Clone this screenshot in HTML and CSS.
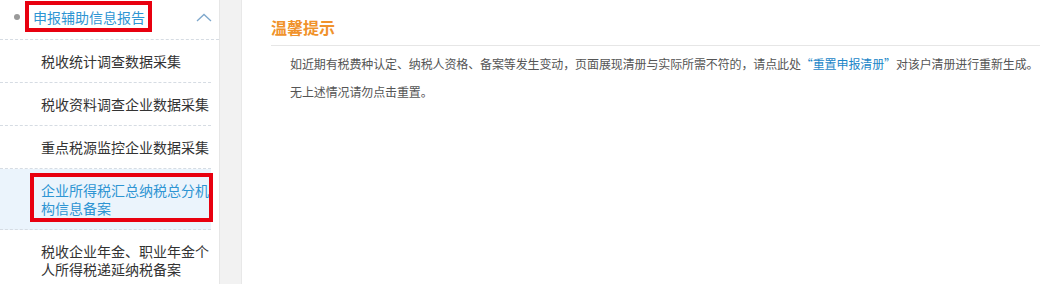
FILE: index.html
```html
<!DOCTYPE html>
<html lang="zh-CN">
<head>
<meta charset="utf-8">
<link rel="stylesheet" href="styles.css">
</head>
<body>
<div class="page">
  <aside class="sidebar">
    <div class="group-head">
      <span class="dot"></span>
      <span class="head-text">申报辅助信息报告</span>
      <svg class="chevron" width="16" height="9" viewBox="0 0 16 9"><polyline points="1,8 8,1.5 15,8" fill="none" stroke="#7fa8cc" stroke-width="1.3"/></svg>
      <span class="mark mark-head"></span>
    </div>
    <ul class="menu">
      <li class="item">税收统计调查数据采集</li>
      <li class="item">税收资料调查企业数据采集</li>
      <li class="item">重点税源监控企业数据采集</li>
      <li class="item active">企业所得税汇总纳税总分机构信息备案<span class="mark mark-active"></span></li>
      <li class="item">税收企业年金、职业年金个人所得税递延纳税备案</li>
    </ul>
  </aside>
  <div class="gutter"></div>
  <main class="content">
    <h2 class="title">温馨提示</h2>
    <div class="notice">
      <p>如近期有税费种认定、纳税人资格、备案等发生变动，页面展现清册与实际所需不符的，请点此处<a class="link">“重置申报清册”</a>对该户清册进行重新生成。</p>
      <p>无上述情况请勿点击重置。</p>
    </div>
  </main>
</div>
</body>
</html>
```

FILE: styles.css
```css
html, body {
  margin: 0;
  padding: 0;
  background: #fff;
}
body {
  font-family: "Noto Sans CJK SC", "Noto Sans", sans-serif;
  color: #333;
}
.page {
  display: flex;
  height: 284px;
  overflow: hidden;
}
.sidebar {
  width: 219px;
  flex: none;
  background: #fff;
  border-right: 1px solid #e6e6e6;
}
.group-head {
  position: relative;
  display: flex;
  align-items: center;
  height: 18px;
  padding: 8px 0 13px 0;
  border-bottom: 1px dashed #d6dce3;
}
.dot {
  width: 6px;
  height: 6px;
  border-radius: 50%;
  background: #9a9a9a;
  margin-left: 14px;
  margin-right: 13px;
  flex: none;
}
.head-text {
  font-size: 14px;
  line-height: 18px;
  color: #2e95d3;
  flex: 1;
}
.chevron {
  margin-right: 7px;
  flex: none;
}
.mark {
  position: absolute;
  border: 4px solid #e8000f;
  pointer-events: none;
}
.mark-head {
  left: 25px;
  top: 1px;
  width: 119px;
  height: 23px;
}
.menu {
  list-style: none;
  margin: 0;
  padding: 0;
}
.item {
  position: relative;
  font-size: 14px;
  line-height: 18px;
  padding: 12px 0 12px 41px;
  width: 170px;
  border-bottom: 1px dashed #d6dce3;
  color: #333;
}
.item.active {
  background: #ebf4fc;
  color: #2e95d3;
}
.mark-active {
  left: 30px;
  top: 4px;
  width: 175px;
  height: 41px;
}
.gutter {
  width: 21px;
  flex: none;
  background: #f2f2f2;
  border-right: 1px solid #e8e8e8;
}
.content {
  flex: 1;
  min-width: 0;
  padding: 15px 0 0 29px;
}
.title {
  margin: 0 4px 0 0;
  font-size: 16px;
  line-height: 24px;
  font-weight: 600;
  color: #f0922b;
  padding-bottom: 6px;
  border-bottom: 1px solid #e6e6e6;
}
.notice {
  padding: 4px 0 0 19px;
}
.notice p {
  margin: 0;
  font-size: 12px;
  line-height: 28px;
  letter-spacing: -0.12px;
  color: #555;
}
.link {
  color: #1b86c8;
}
```
